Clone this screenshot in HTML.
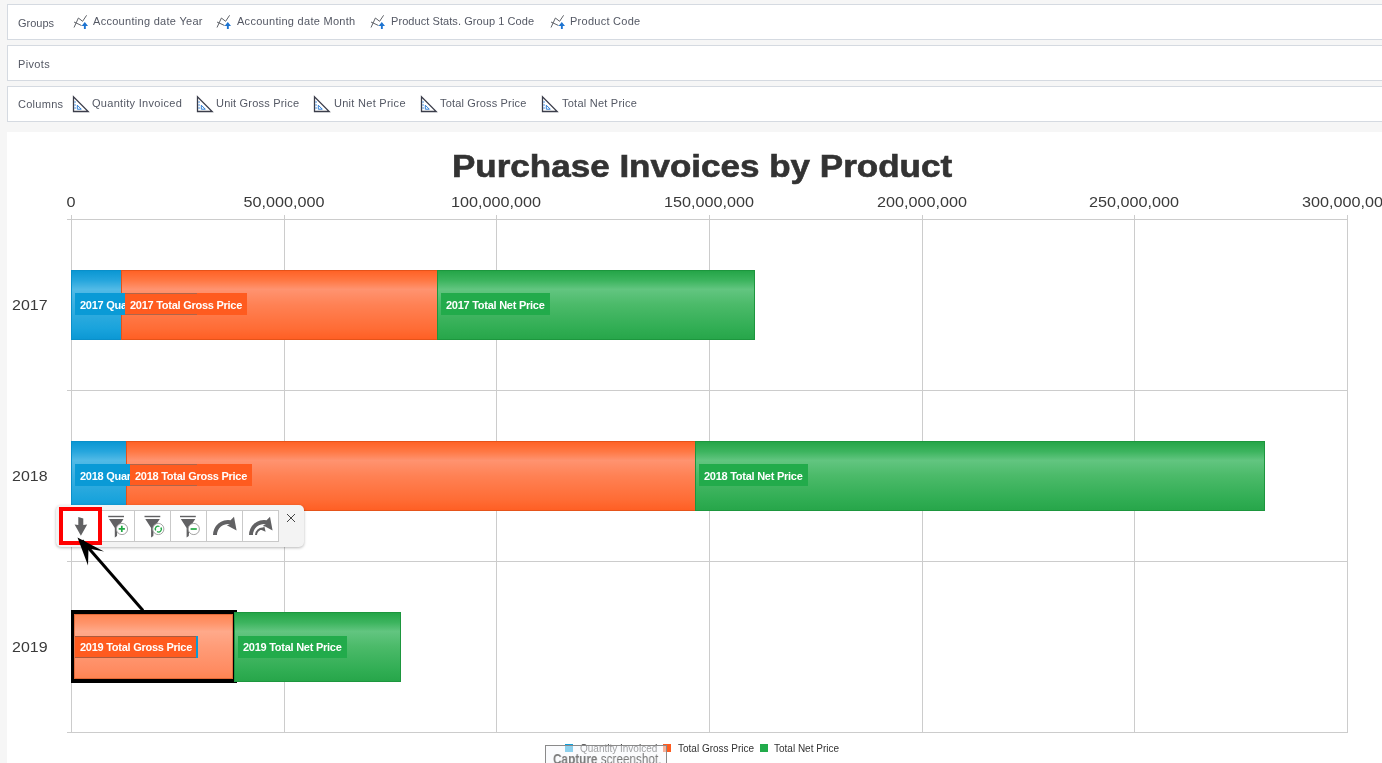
<!DOCTYPE html>
<html><head><meta charset="utf-8">
<style>
html,body{margin:0;padding:0;}
div{will-change:transform;}
body{width:1382px;height:763px;overflow:hidden;background:#f6f6f6;position:relative;font-family:"Liberation Sans",sans-serif;}
.box{position:absolute;left:7px;width:1400px;height:34px;background:#fff;border:1px solid #d5dae1;}
.lbl{position:absolute;font-size:11px;color:#545864;white-space:nowrap;line-height:13px;will-change:transform;}
.ico{position:absolute;overflow:visible;}
#chart{position:absolute;left:7px;top:132px;width:1400px;height:700px;background:#fff;}
.gv{position:absolute;width:1px;top:215px;height:518px;background:#cccccc;}
.gh{position:absolute;height:1px;left:67px;width:1281px;background:#cccccc;}
.tick{position:absolute;top:194px;font-size:14px;color:#3a3a3a;white-space:nowrap;line-height:16px;}
.yl{position:absolute;left:12px;font-size:14px;color:#3a3a3a;line-height:16px;transform-origin:0 0;}
.bar{position:absolute;box-sizing:border-box;}
.blue{background:linear-gradient(#0b97d3 0%,#26a6dd 14%,#52bae6 27%,#3aafe0 50%,#19a3dc 85%,#0c98d4 100%);border:1px solid #0a8fc9;}
.orng{background:linear-gradient(#ff6226 0%,#ff7844 14%,#ff9370 27%,#ff8154 50%,#ff6c35 85%,#ff5f24 100%);border:1px solid #e5531a;}
.orh{background:linear-gradient(#ff8552 0%,#ff946a 14%,#ffa98a 27%,#ff9c78 50%,#ff8c62 85%,#ff8350 100%);}
.grn{background:linear-gradient(#25a548 0%,#3cb45e 14%,#62c580 27%,#4bba69 50%,#30ad53 85%,#27a64a 100%);border:1px solid #1d963e;}
.dl{position:absolute;height:22px;box-sizing:border-box;font-size:11px;font-weight:bold;color:#fff;line-height:22px;padding-left:5px;white-space:nowrap;overflow:hidden;letter-spacing:-0.26px;}
</style></head><body>
<div class="box" style="top:4px"></div>
<div class="box" style="top:45px"></div>
<div class="box" style="top:86px"></div>
<div class="lbl" style="left:18px;top:17px">Groups</div>
<div class="lbl" style="left:18px;top:58px;letter-spacing:0.35px">Pivots</div>
<div class="lbl" style="left:18px;top:98px;letter-spacing:0.28px">Columns</div>
<svg class="ico" style="left:73px;top:14px" width="16" height="17" viewBox="0 0 16 17">
<path d="M1 13.5 L5.4 4 L9.6 7.3 L13.6 1.3" fill="none" stroke="#5f6268" stroke-width="1"/>
<path d="M1 8 L8.5 11.5" fill="none" stroke="#5f6268" stroke-width="1"/>
<path d="M11.8 8.1 L15 11.9 L12.8 11.9 L12.8 15 L10.9 15 L10.9 11.9 L8.6 11.9 Z" fill="#1d74d1"/>
</svg>
<div class="lbl" style="left:93.1px;top:15px;letter-spacing:0.29px">Accounting date Year</div>
<svg class="ico" style="left:216px;top:14px" width="16" height="17" viewBox="0 0 16 17">
<path d="M1 13.5 L5.4 4 L9.6 7.3 L13.6 1.3" fill="none" stroke="#5f6268" stroke-width="1"/>
<path d="M1 8 L8.5 11.5" fill="none" stroke="#5f6268" stroke-width="1"/>
<path d="M11.8 8.1 L15 11.9 L12.8 11.9 L12.8 15 L10.9 15 L10.9 11.9 L8.6 11.9 Z" fill="#1d74d1"/>
</svg>
<div class="lbl" style="left:237.4px;top:15px;letter-spacing:0.285px">Accounting date Month</div>
<svg class="ico" style="left:370px;top:14px" width="16" height="17" viewBox="0 0 16 17">
<path d="M1 13.5 L5.4 4 L9.6 7.3 L13.6 1.3" fill="none" stroke="#5f6268" stroke-width="1"/>
<path d="M1 8 L8.5 11.5" fill="none" stroke="#5f6268" stroke-width="1"/>
<path d="M11.8 8.1 L15 11.9 L12.8 11.9 L12.8 15 L10.9 15 L10.9 11.9 L8.6 11.9 Z" fill="#1d74d1"/>
</svg>
<div class="lbl" style="left:391.4px;top:15px;letter-spacing:0.07px">Product Stats. Group 1 Code</div>
<svg class="ico" style="left:550px;top:14px" width="16" height="17" viewBox="0 0 16 17">
<path d="M1 13.5 L5.4 4 L9.6 7.3 L13.6 1.3" fill="none" stroke="#5f6268" stroke-width="1"/>
<path d="M1 8 L8.5 11.5" fill="none" stroke="#5f6268" stroke-width="1"/>
<path d="M11.8 8.1 L15 11.9 L12.8 11.9 L12.8 15 L10.9 15 L10.9 11.9 L8.6 11.9 Z" fill="#1d74d1"/>
</svg>
<div class="lbl" style="left:569.6px;top:15px;letter-spacing:0.26px">Product Code</div>
<svg class="ico" style="left:72px;top:95px" width="18" height="18" viewBox="0 0 18 18">
<path d="M1.5 1.8 L1.5 16.5 L16.2 16.5 Z" fill="none" stroke="#3b3d4a" stroke-width="1.3" stroke-linejoin="miter"/>
<path d="M2.2 7 H4 M2.2 10 H4 M2.2 13 H4" stroke="#2f7fd6" stroke-width="0.9"/>
<path d="M5.3 10.2 L5.3 14.2 L9.3 14.2 Z" fill="none" stroke="#2f7fd6" stroke-width="1"/>
</svg>
<div class="lbl" style="left:92.4px;top:97px;letter-spacing:0.3px">Quantity Invoiced</div>
<svg class="ico" style="left:196px;top:95px" width="18" height="18" viewBox="0 0 18 18">
<path d="M1.5 1.8 L1.5 16.5 L16.2 16.5 Z" fill="none" stroke="#3b3d4a" stroke-width="1.3" stroke-linejoin="miter"/>
<path d="M2.2 7 H4 M2.2 10 H4 M2.2 13 H4" stroke="#2f7fd6" stroke-width="0.9"/>
<path d="M5.3 10.2 L5.3 14.2 L9.3 14.2 Z" fill="none" stroke="#2f7fd6" stroke-width="1"/>
</svg>
<div class="lbl" style="left:216.3px;top:97px;letter-spacing:0.2px">Unit Gross Price</div>
<svg class="ico" style="left:313px;top:95px" width="18" height="18" viewBox="0 0 18 18">
<path d="M1.5 1.8 L1.5 16.5 L16.2 16.5 Z" fill="none" stroke="#3b3d4a" stroke-width="1.3" stroke-linejoin="miter"/>
<path d="M2.2 7 H4 M2.2 10 H4 M2.2 13 H4" stroke="#2f7fd6" stroke-width="0.9"/>
<path d="M5.3 10.2 L5.3 14.2 L9.3 14.2 Z" fill="none" stroke="#2f7fd6" stroke-width="1"/>
</svg>
<div class="lbl" style="left:333.7px;top:97px;letter-spacing:0.28px">Unit Net Price</div>
<svg class="ico" style="left:420px;top:95px" width="18" height="18" viewBox="0 0 18 18">
<path d="M1.5 1.8 L1.5 16.5 L16.2 16.5 Z" fill="none" stroke="#3b3d4a" stroke-width="1.3" stroke-linejoin="miter"/>
<path d="M2.2 7 H4 M2.2 10 H4 M2.2 13 H4" stroke="#2f7fd6" stroke-width="0.9"/>
<path d="M5.3 10.2 L5.3 14.2 L9.3 14.2 Z" fill="none" stroke="#2f7fd6" stroke-width="1"/>
</svg>
<div class="lbl" style="left:440.0px;top:97px;letter-spacing:0.16px">Total Gross Price</div>
<svg class="ico" style="left:541px;top:95px" width="18" height="18" viewBox="0 0 18 18">
<path d="M1.5 1.8 L1.5 16.5 L16.2 16.5 Z" fill="none" stroke="#3b3d4a" stroke-width="1.3" stroke-linejoin="miter"/>
<path d="M2.2 7 H4 M2.2 10 H4 M2.2 13 H4" stroke="#2f7fd6" stroke-width="0.9"/>
<path d="M5.3 10.2 L5.3 14.2 L9.3 14.2 Z" fill="none" stroke="#2f7fd6" stroke-width="1"/>
</svg>
<div class="lbl" style="left:561.6px;top:97px;letter-spacing:0.24px">Total Net Price</div>
<div id="chart"></div>
<div style="position:absolute;left:452px;top:148px;font-size:30.5px;font-weight:bold;color:#333;-webkit-text-stroke:0.6px #333;white-space:nowrap;line-height:36px;transform-origin:0 0;transform:scaleX(1.148)">Purchase Invoices by Product</div>
<div class="gv" style="left:71px"></div>
<div class="gv" style="left:284px"></div>
<div class="gv" style="left:496px"></div>
<div class="gv" style="left:709px"></div>
<div class="gv" style="left:922px"></div>
<div class="gv" style="left:1134px"></div>
<div class="gv" style="left:1347px"></div>
<div class="gh" style="top:219px"></div>
<div class="gh" style="top:390px"></div>
<div class="gh" style="top:561px"></div>
<div class="gh" style="top:732px"></div>
<div class="tick" style="left:70.5px;transform:translateX(-50%) scaleX(1.156)">0</div>
<div class="tick" style="left:283.5px;transform:translateX(-50%) scaleX(1.156)">50,000,000</div>
<div class="tick" style="left:495.5px;transform:translateX(-50%) scaleX(1.156)">100,000,000</div>
<div class="tick" style="left:708.5px;transform:translateX(-50%) scaleX(1.156)">150,000,000</div>
<div class="tick" style="left:921.5px;transform:translateX(-50%) scaleX(1.156)">200,000,000</div>
<div class="tick" style="left:1133.5px;transform:translateX(-50%) scaleX(1.156)">250,000,000</div>
<div class="tick" style="left:1346.5px;transform:translateX(-50%) scaleX(1.156)">300,000,000</div>
<div class="yl" style="top:297px;left:12.1px;transform:scaleX(1.14)">2017</div>
<div class="yl" style="top:468px;left:12.1px;transform:scaleX(1.14)">2018</div>
<div class="yl" style="top:639px;left:12.1px;transform:scaleX(1.14)">2019</div>
<div class="bar blue" style="left:71px;top:270px;width:51px;height:70px;"></div>
<div class="bar orng" style="left:121px;top:270px;width:317px;height:70px;"></div>
<div class="bar grn" style="left:437px;top:270px;width:318px;height:70px;"></div>
<div class="dl" style="left:75px;top:293px;width:122px;background:#0a9ad6;line-height:24px">2017 Quantity Invoiced</div>
<div class="dl" style="left:125px;top:293px;background:#ff5b1f;padding-right:5px;line-height:24px">2017 Total Gross Price</div>
<div style="position:absolute;left:125px;top:293px;width:72px;height:20px;border-top:1px solid rgba(110,110,110,.55);border-bottom:1px solid rgba(110,110,110,.55)"></div>
<div class="dl" style="left:441px;top:293px;background:#22ab4b;padding-right:5px;line-height:24px">2017 Total Net Price</div>
<div class="bar blue" style="left:71px;top:441px;width:56px;height:70px;"></div>
<div class="bar orng" style="left:126px;top:441px;width:570px;height:70px;"></div>
<div class="bar grn" style="left:695px;top:441px;width:570px;height:70px;"></div>
<div class="dl" style="left:75px;top:464px;width:122px;background:#0a9ad6;line-height:24px">2018 Quantity Invoiced</div>
<div class="dl" style="left:130px;top:464px;background:#ff5b1f;padding-right:5px;line-height:24px">2018 Total Gross Price</div>
<div style="position:absolute;left:130px;top:464px;width:67px;height:20px;border-top:1px solid rgba(110,110,110,.55);border-bottom:1px solid rgba(110,110,110,.55)"></div>
<div class="dl" style="left:699px;top:464px;background:#22ab4b;padding-right:5px;line-height:24px">2018 Total Net Price</div>
<div class="bar orh" style="left:71px;top:610px;width:166px;height:73px;border:4px solid #000;border-left-width:3.5px;border-right-width:4.5px;box-shadow:inset 0 0 0 1px rgba(190,70,20,.45);"></div>
<div class="bar grn" style="left:234px;top:612px;width:167px;height:70px;"></div>
<div class="dl" style="left:75px;top:636px;width:123px;background:#0a9ad6;"></div>
<div class="dl" style="left:75px;top:636px;width:121px;line-height:23px;background:#ff5b1f;box-shadow:inset 0 1px 0 rgba(90,90,90,.5),inset 0 -1px 0 rgba(90,90,90,.5);">2019 Total Gross Price</div>
<div class="dl" style="left:238px;top:636px;line-height:23px;background:#22ab4b;padding-right:5px">2019 Total Net Price</div>
<div style="position:absolute;left:56px;top:505px;width:248px;height:42px;background:#f3f3f3;border-radius:5px;box-shadow:0 1px 3px rgba(0,0,0,.28);"></div>
<div style="position:absolute;left:98px;top:510px;width:179px;height:30px;background:#fff;border:1px solid #c9c9c9;"></div>
<div style="position:absolute;left:134px;top:511px;width:1px;height:30px;background:#c9c9c9;"></div>
<div style="position:absolute;left:170px;top:511px;width:1px;height:30px;background:#c9c9c9;"></div>
<div style="position:absolute;left:206px;top:511px;width:1px;height:30px;background:#c9c9c9;"></div>
<div style="position:absolute;left:242px;top:511px;width:1px;height:30px;background:#c9c9c9;"></div>
<div style="position:absolute;left:62px;top:510px;width:36px;height:30px;background:#fff;border:1px solid #c9c9c9;"></div>
<div style="position:absolute;left:59px;top:507px;width:35px;height:30px;border:4px solid #ff0000;background:#fff;"></div>
<svg style="position:absolute;left:0;top:0;overflow:visible" width="1382" height="763">
<g fill="#616163">
<path d="M78.3 517 L83.3 518.6 L83.3 525 L87.2 524.6 L80.9 535.8 L74.6 524.6 L78.3 525 Z"/>
</g>
<g transform="translate(0 0)"><path d="M108.2 515.8 H124 V517.2 H108.2 Z" fill="#616163"/>
<path d="M109 519 H123.5 L117.5 528 L117 536 L114.8 537.5 L114.8 528 Z" fill="#616163"/></g>
<g transform="translate(36.3 0)"><path d="M108.2 515.8 H124 V517.2 H108.2 Z" fill="#616163"/>
<path d="M109 519 H123.5 L117.5 528 L117 536 L114.8 537.5 L114.8 528 Z" fill="#616163"/></g>
<g transform="translate(71.8 0)"><path d="M108.2 515.8 H124 V517.2 H108.2 Z" fill="#616163"/>
<path d="M109 519 H123.5 L117.5 528 L117 536 L114.8 537.5 L114.8 528 Z" fill="#616163"/></g>

<circle cx="122" cy="529" r="5.6" fill="#fff" stroke="#9a9a9a" stroke-width="0.9"/>
<circle cx="158.3" cy="529" r="5.6" fill="#fff" stroke="#9a9a9a" stroke-width="0.9"/>
<circle cx="193.8" cy="529" r="5.6" fill="#fff" stroke="#9a9a9a" stroke-width="0.9"/>
<path d="M121.8 525.8 V532 M118.7 528.9 H124.9" stroke="#22aa44" stroke-width="1.7"/>
<path d="M190.6 529 H196.8" stroke="#22aa44" stroke-width="1.7"/>
<path d="M155.8 530.5 A2.8 2.8 0 0 1 159.5 526.5 M160.8 527.5 A2.8 2.8 0 0 1 157 531.5" fill="none" stroke="#22aa44" stroke-width="1.3"/>
<path d="M213 535 A15 15 0 0 1 230.6 520.2 L234 516.8 L236.6 530.6 L226.8 525.3 L229.9 524.2 A11 11 0 0 0 217 535 Z" fill="#616163"/>
<path d="M249 535 A15 15 0 0 1 266.6 520.2 L270 516.8 L272.6 530.6 L262.8 525.3 L265.9 524.2 A11 11 0 0 0 253 535 Z" fill="#616163"/>
<path d="M255 535 A7.5 7.5 0 0 1 263.3 527.6 L264.2 525.8 L265.6 531.8 L261 529.8 L262.6 529.6 A5.5 5.5 0 0 0 257 535 Z" fill="#616163"/>
<path d="M287 514 L295 522 M295 514 L287 522" stroke="#3a3a3a" stroke-width="0.95"/>
<path d="M143 610.6 L82 540.5" stroke="#000" stroke-width="3"/>
<path d="M77.5 537.5 L104 551.5 L88.5 548.5 L88 565.5 Z" fill="#000"/>
</svg><div style="position:absolute;left:565px;top:744px;width:8px;height:8px;background:#0fa0dc"></div>
<div style="position:absolute;left:663px;top:744px;width:8px;height:8px;background:#ff5b1f"></div>
<div style="position:absolute;left:760px;top:744px;width:8px;height:8px;background:#22ab4b"></div>
<div style="position:absolute;left:579.5px;top:743px;font-size:10px;line-height:12px;color:#333;white-space:nowrap">Quantity Invoiced</div>
<div style="position:absolute;left:677.5px;top:743px;font-size:10px;line-height:12px;color:#333;white-space:nowrap">Total Gross Price</div>
<div style="position:absolute;left:774px;top:743px;font-size:10px;line-height:12px;color:#333;white-space:nowrap">Total Net Price</div>
<div style="position:absolute;left:545px;top:745px;width:120px;height:30px;border:1px solid #8a8a8a;background:rgba(246,248,252,.55)"></div>
<div style="position:absolute;left:552.5px;top:751px;font-size:14px;line-height:16px;color:#7b7b7b;white-space:nowrap;transform-origin:0 0;transform:scaleX(0.84)"><b>Capture</b> screenshot.</div>
</body></html>
